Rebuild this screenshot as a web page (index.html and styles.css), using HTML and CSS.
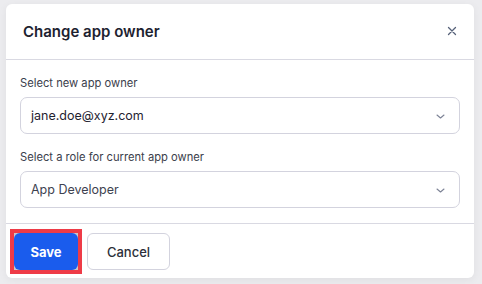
FILE: index.html
```html
<!DOCTYPE html>
<html>
<head>
<meta charset="utf-8">
<link rel="stylesheet" href="styles.css">
</head>
<body>
<div class="modal">
  <div class="header">
    <h2 class="title">Change app owner</h2>
    <button class="close" aria-label="Close">
      <svg width="10" height="10" viewBox="0 0 10 10"><path d="M1.5 1.5L8.5 8.5M8.5 1.5L1.5 8.5" stroke="#566179" stroke-width="1.3" stroke-linecap="round"/></svg>
    </button>
  </div>
  <div class="content">
    <div class="field">
      <label class="label">Select new app owner</label>
      <div class="select">
        <span class="value">jane.doe@xyz.com</span>
        <svg class="chev" width="9" height="5" viewBox="0 0 9 5"><path d="M1 1L4.5 4L8 1" fill="none" stroke="#7d8396" stroke-width="1.1" stroke-linecap="round" stroke-linejoin="round"/></svg>
      </div>
    </div>
    <div class="field">
      <label class="label">Select a role for current app owner</label>
      <div class="select">
        <span class="value muted">App Developer</span>
        <svg class="chev" width="9" height="5" viewBox="0 0 9 5"><path d="M1 1L4.5 4L8 1" fill="none" stroke="#7d8396" stroke-width="1.1" stroke-linecap="round" stroke-linejoin="round"/></svg>
      </div>
    </div>
  </div>
  <div class="footer">
    <span class="focus-ring"><button class="btn primary">Save</button></span>
    <button class="btn secondary">Cancel</button>
  </div>
</div>
</body>
</html>
```
FILE: styles.css
```css
* { box-sizing: border-box; }
html, body { margin: 0; padding: 0; }
body {
  background: #ececef;
  font-family: Inter, "Noto Sans", sans-serif;
  width: 482px;
  height: 284px;
  padding: 4px 0 0 6px;
}
.modal {
  width: 468px;
  height: 274px;
  background: #ffffff;
  border-radius: 6px;
  box-shadow: 0 2px 8px rgba(0,0,0,0.06);
  display: flex;
  flex-direction: column;
}
.header {
  height: 56px;
  flex: none;
  border-bottom: 1px solid #d9d9e2;
  display: flex;
  align-items: center;
  justify-content: space-between;
  padding: 0 16px 0 17px;
}
.title {
  margin: 0;
  font-size: 15px;
  font-weight: 600;
  color: #1d2230;
}
.close {
  border: 0;
  background: none;
  padding: 0;
  width: 12px;
  height: 12px;
  display: flex;
  align-items: center;
  justify-content: center;
  margin-top: -1px;
}
.content {
  flex: none;
  padding: 16px 14px 0 14px;
  display: flex;
  flex-direction: column;
  gap: 16px;
  height: 164px;
  border-bottom: 1px solid #d9d9e2;
}
.field {
  display: flex;
  flex-direction: column;
  gap: 7px;
}
.label {
  font-size: 11.2px;
  color: #3b404c;
  line-height: 14px;
}
.select {
  height: 37px;
  border: 1px solid #d3d3de;
  border-radius: 7px;
  display: flex;
  align-items: center;
  justify-content: space-between;
  padding: 0 14px 0 10px;
}
.value {
  font-size: 12.5px;
  color: #1f2330;
}
.value.muted { color: #3d4250; }
.chev { margin-top: 1px; }
.footer {
  display: flex;
  align-items: flex-start;
  gap: 5px;
  padding: 5px 0 0 4px;
}
.focus-ring {
  display: flex;
  border: 4px solid #ee3b47;
  background: #c6c7cc;
}
.btn {
  height: 37px;
  border-radius: 6px;
  font-family: Inter, "Noto Sans", sans-serif;
  font-size: 13px;
  cursor: pointer;
}
.primary {
  width: 64px;
  background: #1a5ced;
  color: #ffffff;
  border: 0;
  font-weight: 700;
}
.secondary {
  width: 83px;
  margin-top: 4px;
  background: #ffffff;
  color: #2b2f3a;
  border: 1px solid #d3d3de;
  font-weight: 500;
}
```
